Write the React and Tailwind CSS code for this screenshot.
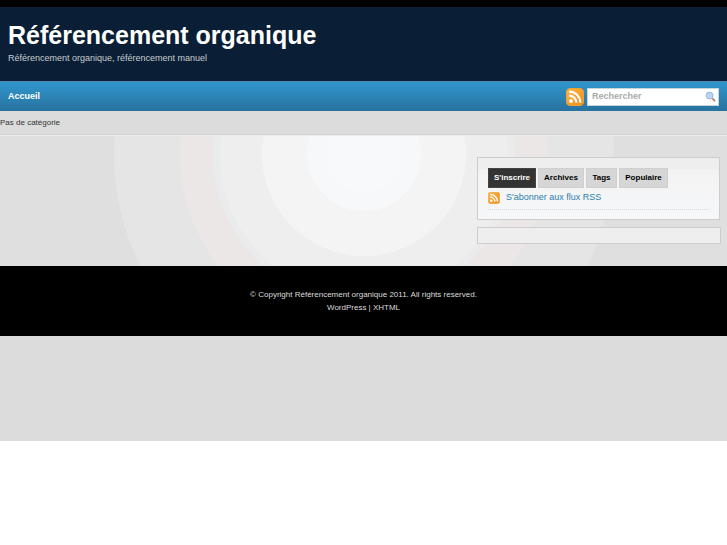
import React from 'react';

const sans = 'font-["Liberation_Sans",Arial,sans-serif]';

function RssIcon({ id, className }) {
  return (
    <svg viewBox="0 0 18 18" className={className}>
      <defs>
        <linearGradient id={id} x1="0" y1="0" x2="1" y2="1">
          <stop offset="0" stopColor="#fdb650" />
          <stop offset="1" stopColor="#f08c12" />
        </linearGradient>
      </defs>
      <rect x="0.5" y="0.5" width="17" height="17" rx="3.5" fill={`url(#${id})`} stroke="#f0a035" />
      <circle cx="5" cy="13" r="1.9" fill="#fff" />
      <path d="M3.2 7.6a7.2 7.2 0 0 1 7.2 7.2" fill="none" stroke="#fff" strokeWidth="2.1" />
      <path d="M3.2 3.6a11.2 11.2 0 0 1 11.2 11.2" fill="none" stroke="#fff" strokeWidth="2.1" />
    </svg>
  );
}

function SearchIcon() {
  return (
    <svg viewBox="0 0 12 12" className="w-[11px] h-[11px] shrink-0">
      <circle cx="5" cy="5" r="3.8" fill="#b9d6ee" stroke="#8fb6d8" />
      <path d="M8 8l3 3" stroke="#b08a68" strokeWidth="2" />
    </svg>
  );
}

const tabs = [
  ["S'inscrire", 'w-[48px]'],
  ['Archives', 'w-[46px]'],
  ['Tags', 'w-[31px]'],
  ['Populaire', 'w-[49px]'],
];

export default function App() {
  return (
    <div className={`${sans} bg-white min-h-[545px]`}>
      <div className="h-[7px] bg-black" />

      {/* Header */}
      <header className="h-[74px] bg-[#0a1f35] pl-2 pt-[14px]">
        <h1 className="text-[25px] leading-[29px] font-bold text-white">Référencement organique</h1>
        <p className="text-[9px] leading-[12px] mt-[2px] text-[#c8ccd0]">Référencement organique, référencement manuel</p>
      </header>

      {/* Nav */}
      <nav className="h-[30px] border-t border-[#4d87a8] bg-gradient-to-b from-[#3196cd] to-[#27729e] flex items-center pl-2 pr-[8px]">
        <a className="text-[9px] font-bold text-white">Accueil</a>
        <RssIcon id="rssBig" className="w-[18px] h-[18px] ml-auto" />
        <div className="w-[132px] h-[18px] ml-[3px] bg-white border border-[#c9d3da] flex items-center pl-1 pr-[2px] justify-between">
          <span className="text-[9px] font-bold text-[#aaaaaa]">Rechercher</span>
          <SearchIcon />
        </div>
      </nav>

      {/* Category */}
      <div className="h-[24px] bg-[#dcdcdc] border-b border-[#d2d2d2] flex items-center text-[8px] text-[#333333]">
        Pas de catégorie
      </div>

      {/* Content */}
      <main className="h-[131px] flex justify-end border-t border-[#ececec] bg-[radial-gradient(circle_at_364px_18px,#f8f9fa_0,#f8f9fa_38px,#f7f8f9_38px,#f7f8f9_57px,#f4f4f4_57px,#f4f4f4_102px,#eeeeee_102px,#eeeeee_144px,#e9ebec_144px,#e9ebec_151px,#eae7e6_151px,#eae7e6_184px,#e5e5e5_184px,#e5e5e5_250px,#dfdfdf_250px)]">
        <aside className="w-[250px] pt-[21px] pr-[6px]">
          <div className="w-[243px] h-[63px] border border-[#cdcdcd] bg-[linear-gradient(#eeeeee_0,#eeeeee_12px,#f3f3f3_12px,#f6f7f9_100%)] pt-[10px] pl-[10px] pr-[10px]">
            <div className="flex gap-[2px]">
              {tabs.map(([t, w], i) => (
                <span
                  key={t}
                  className={`h-[20px] ${w} flex items-center justify-center text-[8px] font-bold border ${i === 0 ? 'bg-[#333333] border-[#444444] text-white' : 'bg-[#d6d6d6] border-[#cfcfcf] text-black'}`}
                >
                  {t}
                </span>
              ))}
            </div>
            <div className="flex items-center gap-[6px] mt-[2px] h-[16px]">
              <RssIcon id="rssSmall" className="w-[12px] h-[12px]" />
              <a className="text-[9px] text-[#2a7fae]">S'abonner aux flux RSS</a>
            </div>
            <div className="mt-[3px] border-b border-dotted border-[#d8d8d8]" />
          </div>
          <div className="w-[244px] h-[17px] mt-[7px] border border-[#cdcdcd] bg-[#eeeeee]" />
        </aside>
      </main>

      {/* Footer */}
      <footer className="h-[70px] bg-black pt-[22px] text-center text-[8px] leading-[13px] text-[#dddddd]">
        <p>© Copyright Référencement organique 2011. All rights reserved.</p>
        <p>WordPress | XHTML</p>
      </footer>

      <div className="h-[105px] bg-[#dcdcdc]" />
    </div>
  );
}
